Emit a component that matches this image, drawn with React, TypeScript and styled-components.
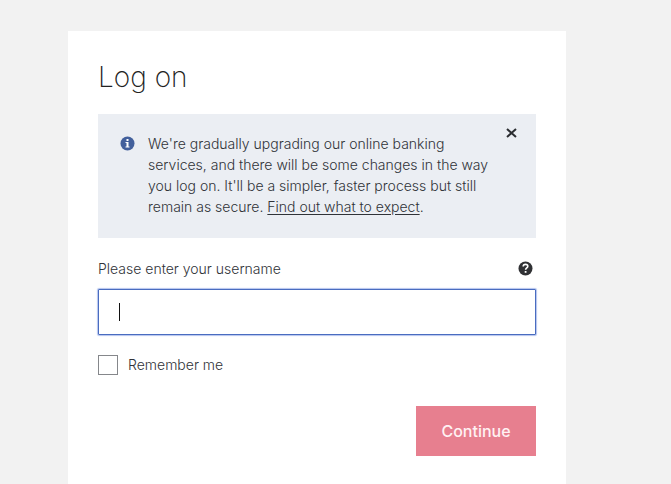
import React, { useState } from "react";
import styled, { createGlobalStyle } from "styled-components";

const GlobalStyle = createGlobalStyle`
  *, *::before, *::after { box-sizing: border-box; }
  body {
    margin: 0;
    background: #f2f2f2;
    color: #303338;
    font: 300 14px/21px Inter, "Liberation Sans", sans-serif;
  }
`;

const Page = styled.main`
  display: flex;
  min-height: 100vh;
  padding: 31px 105px 0 68px;
`;

const Card = styled.form`
  flex: 1;
  min-width: 0;
  padding: 30px 30px 28px;
  background: #fff;
`;

const Title = styled.h1`
  margin: 0 0 21px;
  color: #222;
  font-size: 28px;
  font-weight: 200;
  line-height: 32px;
`;

const Notice = styled.section`
  display: flex;
  align-items: flex-start;
  padding: 14px 19px 21px 22px;
  background: #ebeef3;
`;

const NoticeIcon = styled.svg`
  flex: none;
  width: 15px;
  height: 15px;
  margin: 8px 13px 0 0;
`;

const NoticeText = styled.p`
  flex: 1;
  margin: 5px 0 0;
`;

const NoticeLink = styled.a`
  color: inherit;
  text-decoration: underline;
  text-underline-offset: 2px;
`;

const IconButton = styled.button`
  display: flex;
  flex: none;
  padding: 0;
  border: 0;
  background: none;
  color: #2b2d31;
  cursor: pointer;
`;

const LabelRow = styled.div`
  display: flex;
  align-items: center;
  justify-content: space-between;
  margin: 20px 3px 10px 0;
`;

const Field = styled.div`
  position: relative;
`;

const TextInput = styled.input`
  display: block;
  width: 100%;
  height: 46px;
  padding: 0 20px;
  border: 1px solid #4a6cc0;
  border-radius: 1px;
  outline: 0;
  box-shadow: 0 0 1px 1px #b4c4ee;
  background: #fff;
  color: inherit;
  font: inherit;
  caret-color: transparent;
`;

const Caret = styled.span`
  position: absolute;
  top: 14px;
  left: 21px;
  width: 1px;
  height: 18px;
  background: #111;
  pointer-events: none;
`;

const CheckLabel = styled.label`
  display: flex;
  align-items: center;
  width: fit-content;
  gap: 10px;
  margin-top: 19px;
`;

const Checkbox = styled.input`
  appearance: none;
  width: 20px;
  height: 20px;
  margin: 0;
  border: 1px solid #85878b;
  background: #fff;

  &:checked {
    background: #4a6cc0;
    box-shadow: inset 0 0 0 3px #fff;
  }
`;

const Actions = styled.div`
  display: flex;
  justify-content: flex-end;
  margin-top: 31px;
`;

const SubmitButton = styled.button`
  min-width: 120px;
  height: 50px;
  padding: 0 20px;
  border: 0;
  background: #e77f8f;
  color: #fff1f3;
  font: 500 16px/20px Inter, "Liberation Sans", sans-serif;
  cursor: pointer;
`;

export default function App() {
  const [username, setUsername] = useState("");
  const [noticeOpen, setNoticeOpen] = useState(true);

  return (
    <>
      <GlobalStyle />
      <Page>
        <Card onSubmit={(event: React.FormEvent) => event.preventDefault()}>
          <Title>Log on</Title>
          {noticeOpen && (
            <Notice>
              <NoticeIcon viewBox="0 0 15 15" aria-hidden="true">
                <circle cx="7.5" cy="7.5" r="7" fill="#43609c" />
                <path d="M6.5 3h2v2h-2zM5.5 6h3v4.5h1v1h-4v-1h1V7h-1z" fill="#fff" />
              </NoticeIcon>
              <NoticeText>
                We're gradually upgrading our online banking services, and there will be some
                changes in the way you log on. It'll be a simpler, faster process but still
                remain as secure. <NoticeLink href="#changes">Find out what to expect</NoticeLink>.
              </NoticeText>
              <IconButton type="button" aria-label="Close" onClick={() => setNoticeOpen(false)}>
                <svg width="11" height="11" viewBox="0 0 11 11" aria-hidden="true">
                  <path d="M1 1l9 8M10 1l-9 8" stroke="currentColor" strokeWidth="2" />
                </svg>
              </IconButton>
            </Notice>
          )}
          <LabelRow>
            <label htmlFor="username">Please enter your username</label>
            <IconButton type="button" aria-label="Help with your username">
              <svg width="15" height="15" viewBox="0 0 15 15" aria-hidden="true">
                <circle cx="7.5" cy="7.5" r="7" fill="#303134" />
                <path
                  d="M5.2 5.6C5.2 4.1 6.1 3.4 7.5 3.4s2.3.7 2.3 1.9c0 1.6-2.2 1.7-2.2 3.5"
                  fill="none"
                  stroke="#fff"
                  strokeWidth="1.6"
                />
                <path d="M6.7 10h1.8v1.8H6.7z" fill="#fff" />
              </svg>
            </IconButton>
          </LabelRow>
          <Field>
            <TextInput
              id="username"
              type="text"
              autoComplete="username"
              value={username}
              onChange={(event: React.ChangeEvent<HTMLInputElement>) => setUsername(event.target.value)}
            />
            {username === "" && <Caret />}
          </Field>
          <CheckLabel>
            <Checkbox type="checkbox" />
            Remember me
          </CheckLabel>
          <Actions>
            <SubmitButton type="submit">Continue</SubmitButton>
          </Actions>
        </Card>
      </Page>
    </>
  );
}
